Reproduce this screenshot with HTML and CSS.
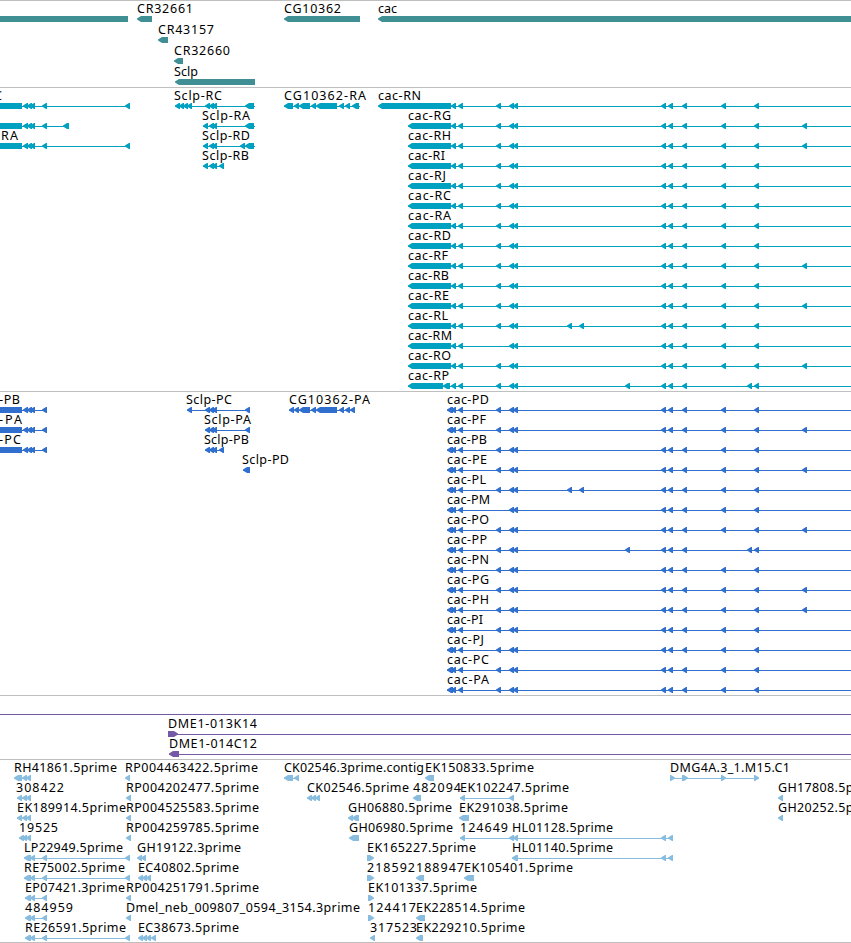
FILE: index.html
```
<!DOCTYPE html>
<html lang="en">
<head>
<meta charset="utf-8">
<title>Genome tracks</title>
<link rel="stylesheet" href="styles.css">
</head>
<body>
<main class="browser" id="browser"></main>
<script src="tracks.js"></script>
</body>
</html>
```
FILE: styles.css
```
* { box-sizing: border-box; }
body { margin: 0; background: #fff; }
.browser { display: flex; flex-direction: column; width: 851px; height: 943px; overflow: hidden; border-bottom: 1px solid #bfbfbf; }
.track { border-top: 1px solid #bfbfbf; flex: none; overflow: hidden; }
.track svg { display: block; }
.label { font-family: "Noto Sans", sans-serif; font-size: 12.5px; fill: #000; }
.genes { height: 87px; color: #408f94; }
.transcripts { height: 304px; color: #00a0c0; }
.proteins { height: 304px; color: #306fcd; }
.clones { height: 64px; color: #7459a6; }
.ests { height: 183px; color: #88bddf; }
.feature { fill: currentColor; }
```
FILE: tracks.js
```
// Feature: [row, label, labelX, labelEnd, lineStart, lineEnd, blocks, direction]
// Block: [start, end]; direction 1 points right, 0 has no head, default points left.
const SHARED = [[496, 501], [509, 514], [513, 518], [661, 666], [668, 673], [682, 687], [721, 726], [754, 759]];
const INTRO = [[23, 28], [27, 32], [30, 35], [42, 47]];
// Label width by the isoform's last letter
const WIDTHS = { A: 43, B: 41, C: 43, D: 43, E: 41, F: 40, G: 43, H: 43, I: 37, J: 38, L: 40, M: 44, N: 43, O: 43, P: 41 };

function isoforms(prefix, names, start) {
  return names.split('').map((n, i) => {
    let shared = SHARED.slice();
    if (n === 'M') shared = shared.slice(1);
    if (n === 'P') shared = shared.filter(b => b[0] !== 721);
    if ('GHFEO'.includes(n)) shared.push([802, 807]);
    if (n === 'L') shared.push([567, 572], [579, 584]);
    if (n === 'P') shared.push([625, 630], [747, 752]);
    const width = WIDTHS[n] - (prefix === 'P' ? 1 : 0);
    return [i, 'cac-' + prefix + n, start, start + width, start, 851, head(prefix, n).concat(shared)];
  });
}
function head(prefix, n) {
  if (prefix === 'P') return [[447, 453], [451, 456], [458, 463]];
  if (n === 'N') return [[378, 451], [451, 456], [458, 463]];
  if (n === 'P') return [[408, 443], [443, 450], [451, 456], [458, 463]];
  return [[408, 451], [451, 456], [458, 463]];
}

const TRACKS = [
  { name: 'genes', height: 86, pitch: 21, first: 18, features: [
    [0, '', 0, 0, 0, 0, [[0, 128]], 0],
    [0, 'CR32661', 137, 193, 0, 0, [[137, 152]]],
    [1, 'CR43157', 158, 214, 0, 0, [[158, 168]]],
    [2, 'CR32660', 174, 230, 0, 0, [[174, 183]]],
    [3, 'Sclp', 174, 198, 0, 0, [[175, 255]]],
    [0, 'CG10362', 284, 341, 0, 0, [[284, 360]]],
    [0, 'cac', 378, 397, 0, 0, [[378, 851]]]
  ] },
  { name: 'transcripts', height: 303, pitch: 20, first: 18, features: [
    [0, 'C', -6, 2, 0, 0, [[0, 22]], 0],
    [0, '', 0, 0, 22, 130, INTRO.concat([[125, 130]])],
    [1, '', 0, 0, 0, 0, [[0, 22]], 0],
    [1, '', 0, 0, 22, 69, INTRO.concat([[63, 69]])],
    [2, 'RA', 1, 18, 0, 0, [[0, 22]], 0],
    [2, '', 0, 0, 22, 130, INTRO.concat([[125, 130]])],
    [0, 'Sclp-RC', 174, 222, 175, 255, [[175, 180], [179, 184], [183, 188], [187, 192], [205, 210], [209, 214], [212, 217], [245, 254]]],
    [1, 'Sclp-RA', 202, 250, 203, 255, [[203, 208], [209, 214], [212, 217], [245, 254]]],
    [2, 'Sclp-RD', 202, 250, 203, 255, [[203, 208], [209, 214], [212, 217], [240, 245], [245, 254]]],
    [3, 'Sclp-RB', 202, 249, 203, 224, [[203, 208], [209, 214], [212, 217], [219, 224]]],
    [0, 'CG10362-RA', 284, 366, 284, 360, [[284, 293], [294, 299], [299, 310], [311, 316], [316, 337], [339, 344], [345, 350], [352, 359]]],
    ...isoforms('R', 'NGHIJCADFBELMOP', 408).map((f, i) => i ? f : [0, f[1], 378, 421, 408, 851, f[6]])
  ] },
  { name: 'proteins', height: 303, pitch: 20, first: 18, features: [
    ...['B', 'A', 'C'].flatMap((n, i) => [
      [i, '-P' + n, -1, [20, 22, 21][i], 0, 0, [[0, 22]], 0],
      [i, '', 0, 0, 22, 47, INTRO]
    ]),
    [0, 'Sclp-PC', 186, 232, 187, 250, [[187, 192], [205, 210], [209, 214], [212, 217], [245, 250]]],
    [1, 'Sclp-PA', 204, 251, 205, 250, [[205, 210], [209, 214], [212, 217], [245, 250]]],
    [2, 'Sclp-PB', 204, 249, 205, 224, [[205, 210], [209, 214], [212, 217], [219, 224]]],
    [3, 'Sclp-PD', 242, 289, 243, 250, [[243, 250]]],
    [0, 'CG10362-PA', 289, 370, 289, 355, [[289, 294], [294, 299], [299, 310], [311, 316], [316, 337], [339, 344], [345, 350], [350, 355]]],
    ...isoforms('P', 'DFBELMOPNGHIJCA', 447)
  ] },
  { name: 'clones', height: 63, pitch: 20, first: 18, features: [
    [0, '', 0, 0, 0, 851, []],
    [1, 'DME1-013K14', 168, 257, 168, 851, [[168, 178]], 1],
    [2, 'DME1-014C12', 169, 257, 169, 851, [[169, 179]]]
  ] },
  { name: 'ests', height: 182, pitch: 20, first: 18, features: [
    [0, 'RH41861.5prime', 14, 117, 14, 31, [[14, 22], [22, 27], [26, 31]]],
    [1, '308422', 16, 64, 17, 31, [[17, 22], [22, 27], [26, 31]]],
    [2, 'EK189914.5prime', 17, 126, 17, 31, [[17, 22], [22, 27], [26, 31]]],
    [3, '19525', 19, 58, 19, 31, [[19, 24], [22, 27], [26, 31]]],
    [4, 'LP22949.5prime', 24, 123, 24, 130, [[24, 31], [30, 35], [42, 47], [125, 130]]],
    [5, 'RE75002.5prime', 24, 125, 24, 130, [[24, 31], [30, 35], [42, 47], [125, 130]]],
    [6, 'EP07421.3prime', 25, 125, 25, 47, [[25, 31], [30, 35], [42, 47]]],
    [7, '484959', 25, 73, 25, 47, [[25, 31], [30, 35], [42, 47]]],
    [8, 'RE26591.5prime', 25, 126, 25, 130, [[25, 31], [30, 35], [42, 47], [125, 130]]],
    [0, 'RP004463422.5prime', 125, 258, 0, 0, [[125, 130]]],
    [1, 'RP004202477.5prime', 126, 259, 0, 0, [[126, 131]]],
    [2, 'RP004525583.5prime', 126, 259, 0, 0, [[126, 131]]],
    [3, 'RP004259785.5prime', 126, 259, 0, 0, [[126, 131]]],
    [4, 'GH19122.3prime', 137, 241, 0, 0, [[137, 142], [141, 146]]],
    [5, 'EC40802.5prime', 138, 239, 0, 0, [[138, 143], [142, 147], [146, 151]]],
    [6, 'RP004251791.5prime', 126, 259, 0, 0, [[126, 131]]],
    [7, 'Dmel_neb_009807_0594_3154.3prime', 126, 360, 0, 0, [[126, 131]]],
    [8, 'EC38673.5prime', 138, 239, 0, 0, [[138, 143], [142, 147], [146, 151], [151, 156]]],
    [0, 'CK02546.3prime.contig', 284, 424, 284, 299, [[284, 293], [294, 299]]],
    [1, 'CK02546.5prime', 307, 409, 307, 320, [[307, 312], [311, 316], [315, 320]]],
    [2, 'GH06880.5prime', 348, 452, 0, 0, [[348, 353], [352, 359]]],
    [3, 'GH06980.5prime', 349, 453, 0, 0, [[349, 359]]],
    [4, 'EK165227.5prime', 367, 476, 0, 0, [[367, 374]], 1],
    [5, '218592', 367, 415, 0, 0, [[367, 374]], 1],
    [6, 'EK101337.5prime', 368, 477, 0, 0, [[368, 374]], 1],
    [7, '124417', 368, 416, 0, 0, [[368, 374]], 1],
    [8, '317523', 370, 417, 0, 0, [[370, 375]]],
    [0, 'EK150833.5prime', 425, 534, 0, 0, [[425, 434]]],
    [1, '482094', 413, 461, 0, 0, [[413, 421]]],
    [5, '188947', 416, 464, 0, 0, [[416, 424]]],
    [7, 'EK228514.5prime', 416, 525, 0, 0, [[416, 425]]],
    [8, 'EK229210.5prime', 416, 525, 0, 0, [[416, 423]]],
    [1, 'EK102247.5prime', 460, 569, 460, 514, [[460, 465], [509, 514]]],
    [2, 'EK291038.5prime', 459, 568, 0, 0, [[459, 469]]],
    [3, '124649', 460, 508, 460, 518, [[460, 465], [509, 514]]],
    [3, 'HL01128.5prime', 512, 613, 512, 673, [[513, 518], [661, 666], [668, 673]]],
    [4, 'HL01140.5prime', 512, 613, 512, 673, [[512, 518], [661, 666], [668, 673]]],
    [5, 'EK105401.5prime', 464, 573, 0, 0, [[464, 474]]],
    [0, 'DMG4A.3_1.M15.C1', 670, 790, 670, 759, [[670, 675], [682, 688], [721, 726], [754, 759]], 1],
    [1, 'GH17808.5prime', 778, 882, 0, 0, [[778, 783]]],
    [2, 'GH20252.5prime', 778, 882, 0, 0, [[778, 783]]]
  ] }
];

function block([a, b], y, direction) {
  const t = y - 3, u = y + 3, w = Math.min(5, b - a);
  let points;
  if (direction === 0) points = [[a, t], [b, t], [b, u], [a, u]];
  else if (direction === 1) points = [[a, t], [b - w + 1, t], [b, y - .5], [b, y + .5], [b - w + 1, u], [a, u]];
  else points = [[a, y - .5], [a + w - 1, t], [b, t], [b, u], [a + w - 1, u], [a, y + .5]];
  return `<polygon points="${points.map(p => p.join()).join(' ')}"/>`;
}

document.getElementById('browser').innerHTML = TRACKS.map(track => {
  const body = track.features.map(([row, label, x, end, from, to, blocks, direction]) => {
    const y = track.first + row * track.pitch;
    const text = label ? `<text class="label" x="${x}" y="${y - 6}" textLength="${end - x}">${label}</text>` : '';
    const line = to ? `<rect x="${from}" y="${y}" width="${to - from}" height="1"/>` : '';
    return `<g class="feature">${line}${blocks.map(b => block(b, y, direction)).join('')}${text}</g>`;
  }).join('');
  return `<section class="track ${track.name}"><svg width="851" height="${track.height}">${body}</svg></section>`;
}).join('');
```
